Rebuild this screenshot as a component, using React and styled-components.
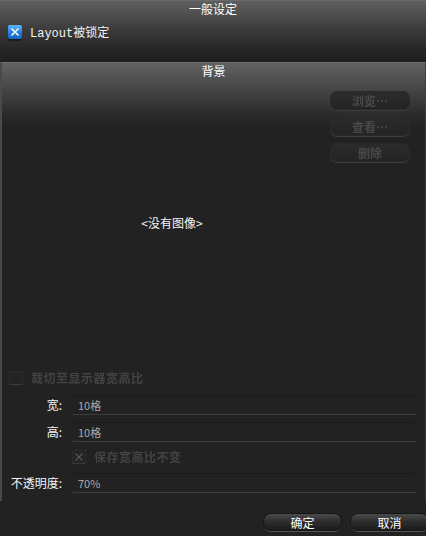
import React from "react";
import styled, { createGlobalStyle } from "styled-components";

const Global = createGlobalStyle`
  html, body { margin: 0; padding: 0; background: #222222; }
  body { font-family: "Liberation Mono", "Noto Sans CJK SC", monospace; font-size: 12px; color: #f0f0f0; }
  * { box-sizing: border-box; }
`;

const Root = styled.div`
  width: 426px;
  height: 536px;
  overflow: hidden;
  display: flex;
  flex-direction: column;
  background: #222222;
`;

const TopPanel = styled.div`
  height: 61px;
  flex: none;
  border-top: 1px solid #6a6a6a;
  background: linear-gradient(#5f5f5f 0px, #3c3c3c 28px, #272727 48px, #1e1e1e 60px);
  display: flex;
  flex-direction: column;
`;

const Title = styled.div`
  height: 16px;
  line-height: 15px;
  text-align: center;
  font-family: "Noto Sans CJK SC", sans-serif;
  font-size: 12px;
  color: #ffffff;
`;

const CheckRow = styled.label`
  display: flex;
  align-items: center;
  gap: 8px;
  padding-left: ${(p) => p.$indent || 8}px;
  height: ${(p) => p.$h || 24}px;
  color: ${(p) => (p.$disabled ? "#434343" : "#f2f2f2")};
  font-size: 12px;
`;

const CheckText = styled.span`
  ${(p) => p.$disabled && "filter: blur(0.7px); letter-spacing: 0.5px; font-weight: bold;"}
`;

const BlueBox = styled.span`
  width: 14px;
  height: 14px;
  border-radius: 2px;
  background: linear-gradient(#5bb6f6, #1f78d8 60%, #1765c4);
  box-shadow: 0 2px 1px rgba(0, 0, 0, 0.45);
  display: flex;
  align-items: center;
  justify-content: center;
`;

const DarkBox = styled.span`
  width: 14px;
  height: 14px;
  border: 1px solid #2c2c2c;
  border-bottom-color: #3a3a3a;
  background: #242424;
  display: flex;
  align-items: center;
  justify-content: center;
`;

const BgPanel = styled.div`
  height: 439px;
  flex: none;
  margin-top: 1px;
  border: 1px solid #3e3e3e;
  border-top: 1px solid #6e6e6e;
  border-left: 2px solid #4a4a4a;
  border-bottom: none;
  background: linear-gradient(#626262 0px, #474747 25px, #2c2c2c 50px, #212121 66px, #222222 67px);
  display: flex;
  flex-direction: column;
`;

const ContentRow = styled.div`
  display: flex;
  height: 286px;
`;

const ImageArea = styled.div`
  flex: 1;
  display: flex;
  align-items: center;
  justify-content: center;
  padding-left: 12px;
  font-family: "Noto Sans CJK SC", sans-serif;
  color: #f4f4f4;
`;

const ButtonColumn = styled.div`
  width: 80px;
  margin-right: 15px;
  padding-top: 12px;
  display: flex;
  flex-direction: column;
  gap: 7px;
`;

const GhostButton = styled.div`
  height: 19px;
  border-radius: 7px;
  border: 1px solid #2a2a2a;
  background: linear-gradient(#2b2b2b, #242424);
  box-shadow: 0 1px 0 #3e3e3e;
  display: flex;
  align-items: center;
  justify-content: center;
  color: #494949;
  font-family: "Noto Sans CJK SC", sans-serif;
  font-size: 12px;
  span { filter: blur(0.7px); font-weight: bold; }
`;

const Options = styled.div`
  display: flex;
  flex-direction: column;
`;

const FieldRow = styled.div`
  display: flex;
  align-items: center;
  height: ${(p) => p.$h || 27}px;
`;

const Label = styled.div`
  width: 60px;
  text-align: right;
  font-family: "Noto Sans CJK SC", sans-serif;
  color: #f4f4f4;
  margin-right: 10px;
`;

const Field = styled.div`
  flex: 1;
  margin-right: 8px;
  height: 20px;
  border-top: 1px solid #1a1a1a;
  border-bottom: 1px solid #3d3d3d;
  border-radius: 2px;
  display: flex;
  align-items: center;
  padding-left: 6px;
  color: #a8a8a8;
  font-family: "Noto Sans CJK SC", sans-serif;
  font-size: 11px;
`;

const Footer = styled.div`
  flex: 1;
  display: flex;
  justify-content: flex-end;
  align-items: flex-start;
  padding-top: 12px;
  gap: 8px;
  margin-right: -3px;
`;

const DialogButton = styled.div`
  width: 79px;
  height: 18px;
  border-radius: 8px;
  background: linear-gradient(#4a4a4a, #2c2c2c 50%, #1c1c1c);
  border: 1px solid #161616;
  box-shadow: 0 2px 0 -1px #555;
  display: flex;
  align-items: center;
  justify-content: center;
  font-family: "Noto Sans CJK SC", sans-serif;
  color: #ffffff;
  font-size: 12px;
`;

const XMark = ({ color, size = 10, w = 1.6 }) => (
  <svg width={size} height={size} viewBox="0 0 10 10">
    <path d="M1.5 1.5 L8.5 8.5 M8.5 1.5 L1.5 8.5" stroke={color} strokeWidth={w} />
  </svg>
);

export default function App() {
  return (
    <Root>
      <Global />
      <TopPanel>
        <Title>一般设定</Title>
        <CheckRow $h={30}>
          <BlueBox>
            <XMark color="#ffffff" size={10} w={1.5} />
          </BlueBox>
          <CheckText>Layout被锁定</CheckText>
        </CheckRow>
      </TopPanel>
      <BgPanel>
        <Title>背景</Title>
        <ContentRow>
          <ImageArea>&lt;没有图像&gt;</ImageArea>
          <ButtonColumn>
            <GhostButton><span>浏览…</span></GhostButton>
            <GhostButton><span>查看…</span></GhostButton>
            <GhostButton><span>删除</span></GhostButton>
          </ButtonColumn>
        </ContentRow>
        <Options>
          <CheckRow $h={26} $indent={7} $disabled>
            <DarkBox />
            <CheckText $disabled>裁切至显示器宽高比</CheckText>
          </CheckRow>
          <FieldRow>
            <Label>宽:</Label>
            <Field>10格</Field>
          </FieldRow>
          <FieldRow>
            <Label>高:</Label>
            <Field>10格</Field>
          </FieldRow>
          <CheckRow $h={24} $indent={70} $disabled>
            <DarkBox>
              <XMark color="#555555" size={10} w={1.2} />
            </DarkBox>
            <CheckText $disabled>保存宽高比不变</CheckText>
          </CheckRow>
          <FieldRow>
            <Label>不透明度:</Label>
            <Field>70%</Field>
          </FieldRow>
        </Options>
      </BgPanel>
      <Footer>
        <DialogButton>确定</DialogButton>
        <DialogButton>取消</DialogButton>
      </Footer>
    </Root>
  );
}
